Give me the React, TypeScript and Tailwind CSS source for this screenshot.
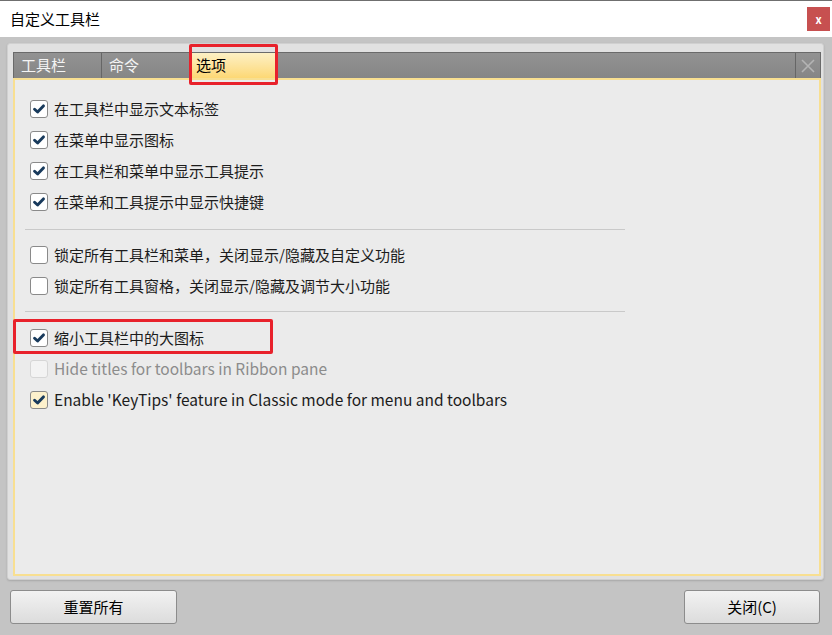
const cjk = "font-['Microsoft_YaHei','Noto_Sans_CJK_SC',sans-serif]";

type Opt = { label: string; checked: boolean; disabled?: boolean; hot?: boolean; latin?: boolean };

const groups: Opt[][] = [
  [
    { label: '在工具栏中显示文本标签', checked: true },
    { label: '在菜单中显示图标', checked: true },
    { label: '在工具栏和菜单中显示工具提示', checked: true },
    { label: '在菜单和工具提示中显示快捷键', checked: true },
  ],
  [
    { label: '锁定所有工具栏和菜单，关闭显示/隐藏及自定义功能', checked: false },
    { label: '锁定所有工具窗格，关闭显示/隐藏及调节大小功能', checked: false },
  ],
  [
    { label: '缩小工具栏中的大图标', checked: true },
    { label: 'Hide titles for toolbars in Ribbon pane', checked: false, disabled: true, latin: true },
    { label: "Enable 'KeyTips' feature in Classic mode for menu and toolbars", checked: true, hot: true, latin: true },
  ],
];

function Check({ opt }: { opt: Opt }) {
  const box = opt.disabled
    ? 'border-[#d6d6d6] bg-[#f3f3f3]'
    : opt.hot
      ? 'border-[#8a8a8a] bg-[#fdf1cc]'
      : 'border-[#8a8a8a] bg-white';
  return (
    <div className="flex h-[31px] items-center pl-[15px]">
      <div className={`flex h-[18px] w-[18px] items-center justify-center rounded-[3px] border ${box}`}>
        {opt.checked && (
          <svg width="12" height="10" viewBox="0 0 12 10">
            <path d="M1.6 5.2 L4.6 8 L10.4 1.9" fill="none" stroke="#183a5c" strokeWidth="2.9" strokeLinecap="round" strokeLinejoin="round" />
          </svg>
        )}
      </div>
      <span
        className={`ml-[6px] leading-none ${opt.latin ? 'text-[15.5px]' : 'text-[15px]'} ${
          opt.disabled ? 'text-[#8c8c8c]' : 'text-[#1c1c1c]'
        }`}
      >
        {opt.label}
      </span>
    </div>
  );
}

export default function App() {
  return (
    <div className={`relative flex h-[635px] w-[832px] flex-col overflow-hidden bg-[#c4c4c4] ${cjk}`}>
      {/* title bar */}
      <div className="flex h-[37px] items-center justify-between border-t border-[#6f6f6f] bg-white pl-[10px] pr-[2px]">
        <span className="text-[15px] text-black">自定义工具栏</span>
        <div className="flex h-[24px] w-[23px] items-center justify-center bg-[#c75050] text-[11px] font-bold leading-none text-white">
          x
        </div>
      </div>

      {/* main panel */}
      <div className="ml-[7px] mr-[8px] mt-[6px] flex h-[537px] flex-col rounded-[3px] border border-[#d0d0d0] bg-[#e1e1e1] pb-[3px] pl-[5px] pr-[2px] pt-[8px] shadow-[0_1px_2px_rgba(0,0,0,0.15)]">
        {/* tabs */}
        <div className="flex h-[26px] border border-b-0 border-[#6a6a6a] bg-gradient-to-b from-[#929292] to-[#868686] text-[15px]">
          <div className="flex w-[88px] items-center border-r border-[#666] pl-[7px] text-[#f4f4f4]">工具栏</div>
          <div className="flex w-[88px] items-center pl-[7px] text-[#f4f4f4]">命令</div>
          <div className="flex w-[86px] items-center bg-gradient-to-b from-[#fdf0c4] to-[#fdd874] pl-[6px] text-black">选项</div>
          <div className="flex-1" />
          <div className="flex w-[25px] items-center justify-center border-l border-[#666]">
            <svg width="16" height="16" viewBox="0 0 16 16">
              <path d="M2 2 L14 14 M14 2 L2 14" stroke="#b4b4b4" strokeWidth="1.6" />
            </svg>
          </div>
        </div>

        {/* content */}
        <div className="flex-1 border-2 border-[#f8df91] bg-[#ebebeb] pt-[13px]">
          {groups.map((g, gi) => (
            <div key={gi}>
              {gi > 0 && (
                <div className={`ml-[10px] h-px w-[600px] bg-[#c9c9c9] ${gi === 1 ? 'mb-[9px] mt-[12px]' : 'mb-[10px] mt-[10px]'}`} />
              )}
              {g.map((o) => (
                <Check key={o.label} opt={o} />
              ))}
            </div>
          ))}
        </div>
      </div>

      {/* buttons */}
      <div className="mt-[10px] flex justify-between pl-[10px] pr-[12px]">
        <button className="h-[34px] w-[167px] rounded-[3px] border border-[#8c8c8c] bg-gradient-to-b from-[#f2f2f2] to-[#dcdcdc] text-[15px] text-black">
          重置所有
        </button>
        <button className="h-[34px] w-[136px] rounded-[3px] border border-[#8c8c8c] bg-gradient-to-b from-[#f2f2f2] to-[#dcdcdc] text-[15px] text-black">
          关闭(C)
        </button>
      </div>

      {/* annotation boxes */}
      <div className="pointer-events-none absolute left-[189px] top-[44px] h-[41px] w-[89px] rounded-[2px] border-[3px] border-[#e8212b]" />
      <div className="pointer-events-none absolute left-[13px] top-[319px] h-[35px] w-[260px] rounded-[2px] border-[3px] border-[#e8212b]" />
    </div>
  );
}
